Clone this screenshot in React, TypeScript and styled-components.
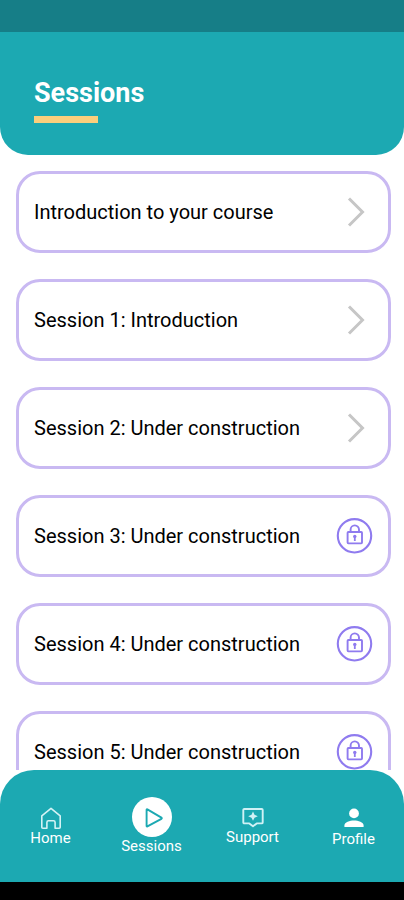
import React from "react";
import styled, { createGlobalStyle } from "styled-components";

const teal = "#1ca9b2";

const GlobalStyle = createGlobalStyle`
  *, *::before, *::after { box-sizing: border-box; }
  body {
    margin: 0;
    background: #fff;
    color: #000;
    font-family: Roboto, "Liberation Sans", sans-serif;
  }
`;

const Screen = styled.div`
  display: flex;
  flex-direction: column;
  height: 100vh;
  background: #fff;
`;

const StatusBar = styled.div`
  flex: none;
  height: 32px;
  background: #167e87;
`;

const Header = styled.header`
  flex: none;
  padding: 45px 34px 32px;
  background: ${teal};
  border-radius: 0 0 28px 28px;
`;

const Title = styled.h1`
  margin: 0;
  color: #fff;
  font-size: 27px;
  font-weight: 700;
  line-height: 32px;

  &::after {
    content: "";
    display: block;
    width: 64px;
    height: 7px;
    margin-top: 7px;
    background: #fbcf7c;
  }
`;

const SessionList = styled.ul`
  flex: 1;
  min-height: 0;
  margin: 0;
  padding: 16px 13px 16px 16px;
  list-style: none;
  display: flex;
  flex-direction: column;
  gap: 26px;
  overflow-y: auto;
  scrollbar-width: none;
`;

const SessionItem = styled.li`
  flex: none;
`;

const SessionCard = styled.button`
  display: flex;
  align-items: center;
  justify-content: space-between;
  width: 100%;
  min-height: 82px;
  padding: 0 15px;
  border: 3px solid #c9b9f2;
  border-radius: 24px;
  background: #fff;
  color: inherit;
  font: inherit;
  font-size: 20px;
  line-height: 24px;
  text-align: left;
  cursor: pointer;
`;

const CardIcon = styled.span<{ $inset?: boolean }>`
  display: flex;
  flex: none;
  margin-right: ${(p) => (p.$inset ? "8px" : "0")};
`;

const BottomNav = styled.nav`
  flex: none;
  display: grid;
  grid-template-columns: repeat(4, 1fr);
  align-items: center;
  min-height: 112px;
  background: ${teal};
  border-radius: 34px 34px 0 0;
`;

const NavLink = styled.a<{ $active?: boolean }>`
  display: flex;
  flex-direction: column;
  align-items: center;
  padding-top: ${(p) => (p.$active ? "0" : "2px")};
  color: #fff;
  font-size: 15px;
  line-height: 18px;
  text-decoration: none;
`;

const NavIcon = styled.span<{ $active?: boolean }>`
  display: flex;
  border-radius: 50%;
  background: ${(p) => (p.$active ? "#fff" : "transparent")};
  color: ${(p) => (p.$active ? teal : "#fff")};
`;

const SystemBar = styled.div`
  flex: none;
  height: 18px;
  background: #000;
`;

const ChevronIcon = () => (
  <svg width="18" height="30" viewBox="0 0 18 30" fill="none" stroke="#c6c6c6" strokeWidth="3" aria-hidden="true">
    <path d="M2 1.5 15.5 15 2 28.5" />
  </svg>
);

const LockIcon = () => (
  <svg width="37" height="36" viewBox="0 0 37 36" fill="none" stroke="#8f7bef" strokeWidth="2.1" role="img" aria-label="Locked">
    <circle cx="18.5" cy="17.8" r="16.7" />
    <rect x="11.6" y="14" width="14.4" height="11.4" rx="0.8" strokeWidth="1.9" />
    <path d="M14.6 14v-2.4a4.2 4.2 0 0 1 8.4 0v2.4" strokeWidth="1.9" />
    <circle cx="18.8" cy="18.4" r="1.7" fill="#8f7bef" stroke="none" />
    <path d="M18.8 18.4v4.6" strokeWidth="1.8" />
  </svg>
);

const HomeIcon = () => (
  <svg width="22" height="22" viewBox="0 0 22 22" fill="none" stroke="#d5f3f5" strokeWidth="1.6" strokeLinejoin="round" aria-hidden="true">
    <path d="M1.8 8.8 11 1.4l9.2 7.4v11.4a1 1 0 0 1-1 1h-4.1v-5.8a1.6 1.6 0 0 0-1.6-1.6h-5a1.6 1.6 0 0 0-1.6 1.6v5.8H2.8a1 1 0 0 1-1-1Z" />
  </svg>
);

const PlayIcon = () => (
  <svg width="40" height="40" viewBox="0 0 40 40" fill="none" stroke="currentColor" strokeWidth="1.9" strokeLinejoin="round" aria-hidden="true">
    <path d="M14.6 12.8v16.2q0 .8.8.4l14-7.6q.8-.6 0-1.2l-14-8.2q-.8-.4-.8.4Z" />
  </svg>
);

const SupportIcon = () => (
  <svg width="22" height="20" viewBox="0 0 22 20" fill="none" stroke="#d0f1f5" strokeWidth="1.9" strokeLinejoin="round" aria-hidden="true">
    <path d="M2.3 1h17.4a1 1 0 0 1 1 1v12.4a1 1 0 0 1-1 1h-5L11 18.2l-3.7-2.8h-5a1 1 0 0 1-1-1V2a1 1 0 0 1 1-1Z" />
    <path d="M11 3.6 12.5 6.7 15.8 8.2 12.5 9.7 11 12.8 9.5 9.7 6.2 8.2 9.5 6.7Z" fill="#d0f1f5" stroke="none" />
  </svg>
);

const ProfileIcon = () => (
  <svg width="22" height="24" viewBox="0 0 22 24" fill="currentColor" aria-hidden="true">
    <circle cx="11" cy="7.4" r="4.9" />
    <path d="M1.4 21v-1.6c0-3.4 5.4-5 9.6-5s9.6 1.6 9.6 5V21Z" />
  </svg>
);

const sessions = [
  { title: "Introduction to your course", locked: false },
  { title: "Session 1: Introduction", locked: false },
  { title: "Session 2: Under construction", locked: false },
  { title: "Session 3: Under construction", locked: true },
  { title: "Session 4: Under construction", locked: true },
  { title: "Session 5: Under construction", locked: true },
];

const navItems = [
  { label: "Home", href: "#home", Icon: HomeIcon },
  { label: "Sessions", href: "#sessions", Icon: PlayIcon, active: true },
  { label: "Support", href: "#support", Icon: SupportIcon },
  { label: "Profile", href: "#profile", Icon: ProfileIcon },
];

export default function App() {
  return (
    <>
      <GlobalStyle />
      <Screen>
        <StatusBar />
        <Header>
          <Title>Sessions</Title>
        </Header>
        <SessionList>
          {sessions.map(({ title, locked }) => (
            <SessionItem key={title}>
              <SessionCard type="button">
                {title}
                <CardIcon $inset={!locked}>{locked ? <LockIcon /> : <ChevronIcon />}</CardIcon>
              </SessionCard>
            </SessionItem>
          ))}
        </SessionList>
        <BottomNav aria-label="Main">
          {navItems.map(({ label, href, Icon, active }) => (
            <NavLink key={label} href={href} $active={active} aria-current={active ? "page" : undefined}>
              <NavIcon $active={active}>
                <Icon />
              </NavIcon>
              {label}
            </NavLink>
          ))}
        </BottomNav>
        <SystemBar />
      </Screen>
    </>
  );
}
